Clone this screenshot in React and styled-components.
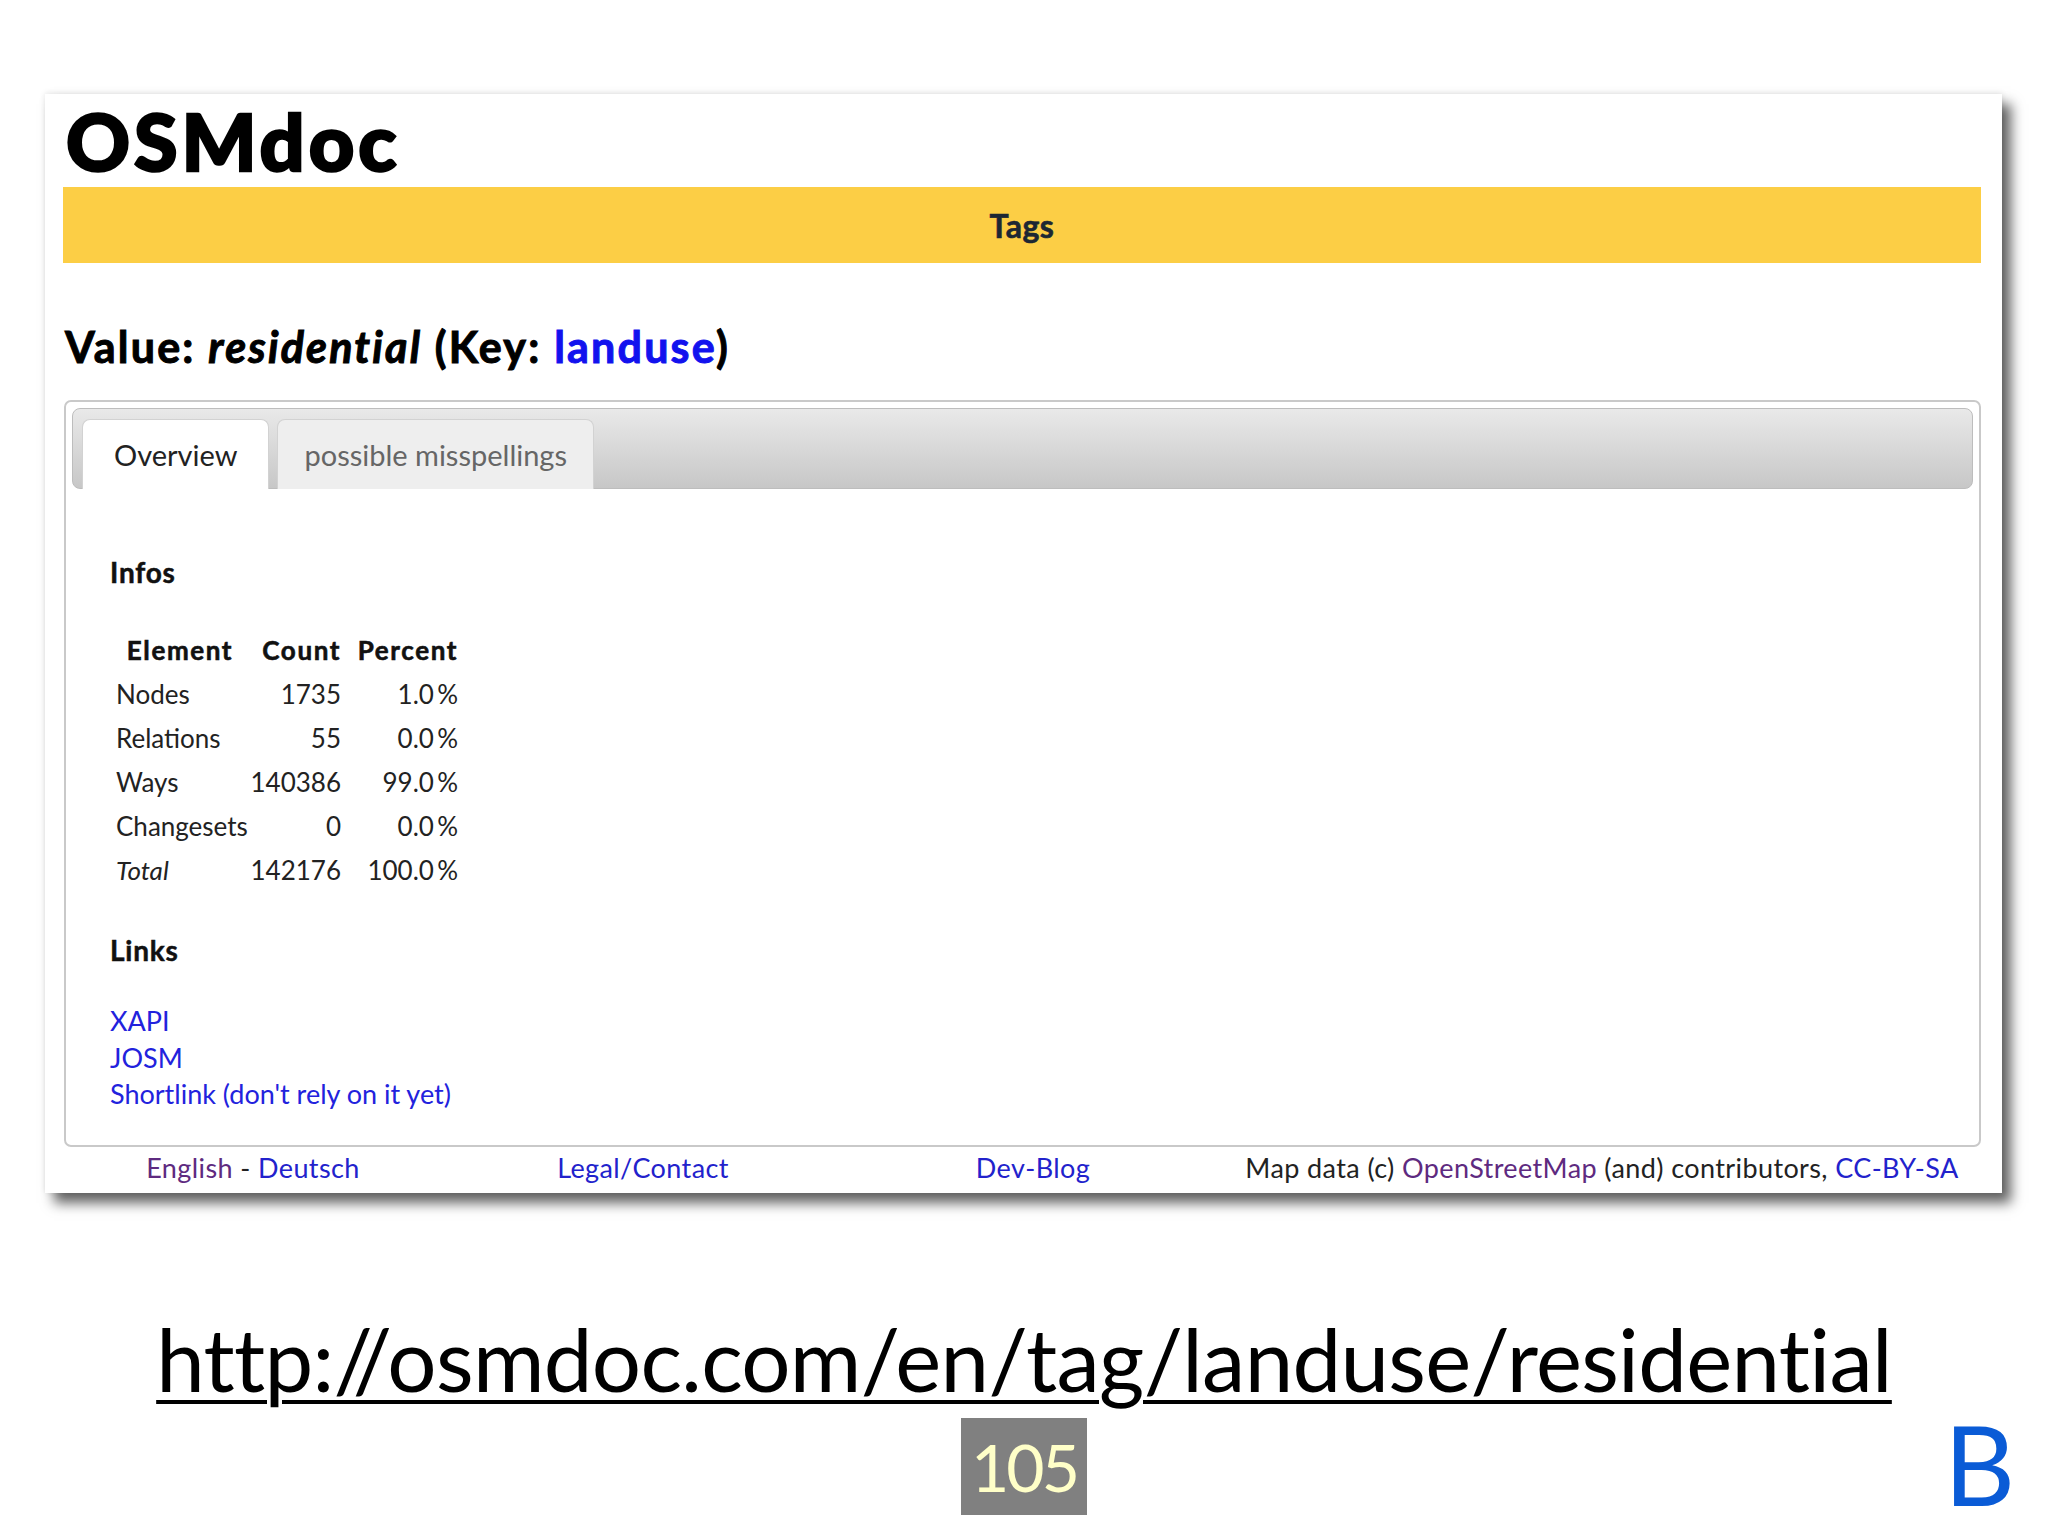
import React from "react";
import styled, { createGlobalStyle } from "styled-components";

const GlobalStyle = createGlobalStyle`
  html, body {
    margin: 0;
    padding: 0;
    background: #fff;
  }
  body {
    font-family: Lato, "Open Sans", "DejaVu Sans", sans-serif;
  }
`;

const Slide = styled.div`
  width: 2048px;
  height: 1536px;
  overflow: hidden;
  display: flex;
  flex-direction: column;
  background: #fff;
`;

const Window = styled.div`
  margin: 94px 0 0 45px;
  width: 1957px;
  height: 1099px;
  box-sizing: border-box;
  padding: 0 21px 0 18px;
  background: #fff;
  display: flex;
  flex-direction: column;
  box-shadow: 9px 10px 12px rgba(0, 0, 0, 0.62), 0 -1px 6px rgba(0, 0, 0, 0.1);
`;

const Logo = styled.h1`
  margin: 0;
  padding-left: 3px;
  height: 93px;
  font: 900 79px/93px Lato, sans-serif;
  letter-spacing: 4px;
  -webkit-text-stroke: 2.5px #000;
  color: #000;
`;

const Banner = styled.div`
  height: 76px;
  background: #fcce45;
  display: flex;
  align-items: center;
  justify-content: center;
  font: 700 32px Lato, sans-serif;
  letter-spacing: 0.5px;
  -webkit-text-stroke: 0.6px #1c2733;
  color: #1c2733;
`;

const Heading = styled.h2`
  margin: 59px 0 28px;
  padding-left: 2px;
  font: 700 43px/50px Lato, sans-serif;
  letter-spacing: 2.2px;
  -webkit-text-stroke: 1px currentColor;
  color: #000;

  em {
    font-style: italic;
  }
  a {
    color: #1212ee;
    text-decoration: none;
  }
`;

const TabBox = styled.div`
  flex: 1;
  margin-left: 1px;
  border: 2px solid #c9c9c9;
  border-radius: 7px;
  padding: 6px;
  display: flex;
  flex-direction: column;
`;

const TabBar = styled.div`
  height: 81px;
  box-sizing: border-box;
  background: linear-gradient(#e9e9e9, #c7c7c7);
  border: 1px solid #bdbdbd;
  border-radius: 8px;
  display: flex;
  align-items: flex-end;
  padding: 0 9px;
  gap: 8px;
`;

const Tab = styled.div`
  height: 70px;
  margin-bottom: -1px;
  padding: 0 ${(p) => (p.$active ? 31 : 26)}px;
  display: flex;
  align-items: center;
  box-sizing: border-box;
  border: 1px solid #d2d2d2;
  border-bottom: none;
  border-radius: 8px 8px 0 0;
  font: 400 29px Lato, sans-serif;
  background: ${(p) => (p.$active ? "#fff" : "#eeeeee")};
  color: ${(p) => (p.$active ? "#222" : "#666")};
`;

const Panel = styled.div`
  padding: 61px 0 0 38px;
`;

const SectionTitle = styled.h3`
  margin: ${(p) => p.$gap || 0}px 0 0;
  font: 700 28px/44px Lato, sans-serif;
  letter-spacing: 0.8px;
  -webkit-text-stroke: 0.5px #111;
  color: #111;
`;

const InfoTable = styled.table`
  margin: 34px 0 0 6px;
  border-collapse: collapse;
  table-layout: fixed;
  width: 342px;
  font: 400 26px/44px Lato, sans-serif;
  color: #222;

  th, td {
    padding: 0;
    height: 44px;
    white-space: nowrap;
  }
  th {
    font-weight: 700;
    letter-spacing: 1.6px;
    -webkit-text-stroke: 0.6px #111;
    color: #111;
  }
  th:nth-child(1) {
    width: 128px;
    text-align: center;
  }
  td:nth-child(1) {
    text-align: left;
  }
  th:nth-child(2), td:nth-child(2) {
    width: 97px;
    text-align: right;
  }
  th:nth-child(3), td:nth-child(3) {
    width: 117px;
    text-align: right;
  }
  tr.total td:first-child {
    font-style: italic;
  }
`;

const LinkList = styled.div`
  margin-top: 31px;
  display: flex;
  flex-direction: column;
  font: 400 27px/36.5px Lato, sans-serif;

  a {
    color: #2222dd;
    text-decoration: none;
  }
`;

const Footer = styled.div`
  height: 40px;
  display: grid;
  grid-template-columns: 380px 400px 380px 758px;
  align-items: center;
  text-align: center;
  font: 400 27px Lato, sans-serif;
  letter-spacing: 0.4px;
  color: #222;
  margin-bottom: 6px;
`;

const FootLink = styled.a`
  color: ${(p) => (p.$visited ? "#5e2a80" : "#2222cc")};
  text-decoration: none;
`;

const Url = styled.div`
  margin-top: 113px;
  text-align: center;
  font: 400 87px/106px Lato, sans-serif;
  letter-spacing: -0.7px;
  color: #000;
  text-decoration: underline;
  text-decoration-thickness: 4px;
  text-underline-offset: 8px;
`;

const BottomRow = styled.div`
  margin-top: 6px;
  display: grid;
  grid-template-columns: 1fr 126px 1fr;
  height: 97px;
`;

const PageNum = styled.div`
  grid-column: 2;
  background: #808080;
  color: #ffffc8;
  display: flex;
  align-items: center;
  justify-content: center;
  font: 400 66px Lato, sans-serif;
  letter-spacing: -3px;
`;

const Brand = styled.div`
  justify-self: end;
  margin-right: 33px;
  color: #0a5bd6;
  font: 400 110px/90px Lato, sans-serif;
`;

const rows = [
  ["Nodes", "1735", "1.0"],
  ["Relations", "55", "0.0"],
  ["Ways", "140386", "99.0"],
  ["Changesets", "0", "0.0"],
];

export default function App() {
  return (
    <>
      <GlobalStyle />
      <Slide>
        <Window>
          <Logo>OSMdoc</Logo>
          <Banner>Tags</Banner>
          <Heading>
            Value: <em>residential</em> (Key: <a href="#">landuse</a>)
          </Heading>
          <TabBox>
            <TabBar>
              <Tab $active>Overview</Tab>
              <Tab>possible misspellings</Tab>
            </TabBar>
            <Panel>
              <SectionTitle>Infos</SectionTitle>
              <InfoTable>
                <thead>
                  <tr>
                    <th>Element</th>
                    <th>Count</th>
                    <th>Percent</th>
                  </tr>
                </thead>
                <tbody>
                  {rows.map(([name, count, pct]) => (
                    <tr key={name}>
                      <td>{name}</td>
                      <td>{count}</td>
                      <td>{pct}&thinsp;%</td>
                    </tr>
                  ))}
                  <tr className="total">
                    <td>Total</td>
                    <td>142176</td>
                    <td>100.0&thinsp;%</td>
                  </tr>
                </tbody>
              </InfoTable>
              <SectionTitle $gap={36}>Links</SectionTitle>
              <LinkList>
                <a href="#">XAPI</a>
                <a href="#">JOSM</a>
                <a href="#">Shortlink (don't rely on it yet)</a>
              </LinkList>
            </Panel>
          </TabBox>
          <Footer>
            <span>
              <FootLink $visited href="#">English</FootLink> - <FootLink href="#">Deutsch</FootLink>
            </span>
            <span>
              <FootLink href="#">Legal/Contact</FootLink>
            </span>
            <span>
              <FootLink href="#">Dev-Blog</FootLink>
            </span>
            <span>
              Map data (c) <FootLink $visited href="#">OpenStreetMap</FootLink> (and) contributors,{" "}
              <FootLink href="#">CC-BY-SA</FootLink>
            </span>
          </Footer>
        </Window>
        <Url>http://osmdoc.com/en/tag/landuse/residential</Url>
        <BottomRow>
          <PageNum>105</PageNum>
          <Brand>B</Brand>
        </BottomRow>
      </Slide>
    </>
  );
}
